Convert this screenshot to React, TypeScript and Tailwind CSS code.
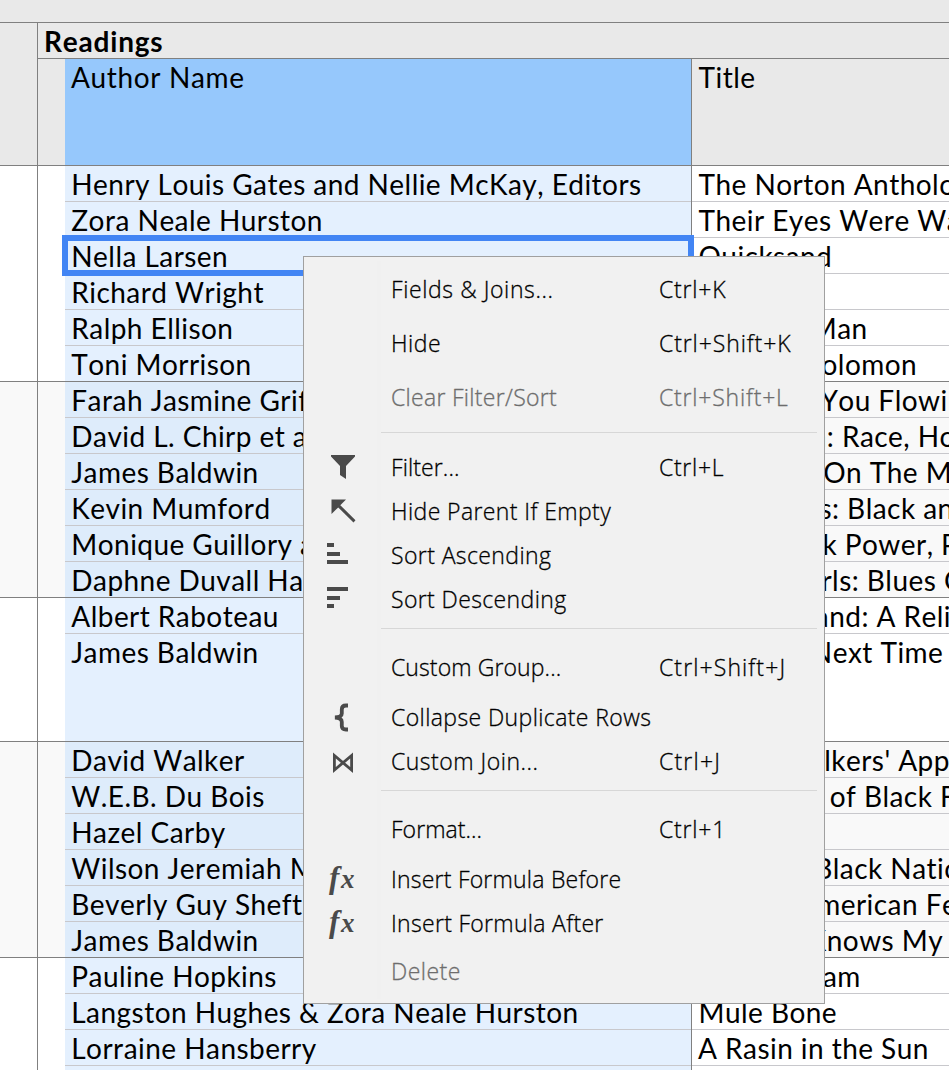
import React from "react";

type Row = { author: string; title: string; pad?: string; tall?: boolean; selected?: boolean };
type Group = { alt?: boolean; rows: Row[] };

const groups: Group[] = [
  {
    rows: [
      { author: "Henry Louis Gates and Nellie McKay, Editors", title: "The Norton Anthology" },
      { author: "Zora Neale Hurston", title: "Their Eyes Were Watching God" },
      { author: "Nella Larsen", title: "Quicksand", selected: true },
      { author: "Richard Wright", title: "" },
      { author: "Ralph Ellison", title: "Invisible Man" },
      { author: "Toni Morrison", title: "Song of Solomon", pad: "pl-[9px]" },
    ],
  },
  {
    alt: true,
    rows: [
      { author: "Farah Jasmine Griffin", title: "Who Set You Flowin'", pad: "pl-[10px]" },
      { author: "David L. Chirp et al.", title: "Transition: Race, Home", pad: "pl-[7px]" },
      { author: "James Baldwin", title: "Go Tell It On The Mountain", pad: "pl-[6px]" },
      { author: "Kevin Mumford", title: "Interzones: Black and White", pad: "pl-[6px]" },
      { author: "Monique Guillory and", title: "Soul: Black Power, Politics" },
      { author: "Daphne Duvall Harrison", title: "Black Pearls: Blues Queens" },
    ],
  },
  {
    rows: [
      { author: "Albert Raboteau", title: "Canaan Land: A Religious", pad: "pl-[6px]" },
      { author: "James Baldwin", title: "The Fire Next Time", tall: true, pad: "pl-[6px]" },
    ],
  },
  {
    alt: true,
    rows: [
      { author: "David Walker", title: "David Walkers' Appeal" },
      { author: "W.E.B. Du Bois", title: "The Souls of Black Folk" },
      { author: "Hazel Carby", title: "" },
      { author: "Wilson Jeremiah Moses", title: "Classical Black Nationalism" },
      { author: "Beverly Guy Sheftall", title: "African American Feminist" },
      { author: "James Baldwin", title: "Nobody Knows My Name" },
    ],
  },
  {
    rows: [
      { author: "Pauline Hopkins", title: "Primal Dram", pad: "pl-[11px]" },
      { author: "Langston Hughes & Zora Neale Hurston", title: "Mule Bone" },
      { author: "Lorraine Hansberry", title: "A Rasin in the Sun", pad: "pl-[6px]" },
      { author: "", title: "" },
    ],
  },
];

function FilterIcon() {
  return (
    <svg width="50" height="44" viewBox="0 0 50 44" fill="#4a4a4a">
      <path d="M13 9H37V10.500L28 20V33L22 29V20L13 10.500Z" />
    </svg>
  );
}

function ParentIcon() {
  return (
    <svg width="50" height="44" viewBox="0 0 50 44" fill="#4a4a4a">
      <path d="M13.500 9.500H28L22.300 15.200L37.500 30.200L35.500 32.400L20.200 17.400L13.500 24Z" />
    </svg>
  );
}

function AscIcon() {
  return (
    <svg width="50" height="44" viewBox="0 0 50 44" fill="#4a4a4a">
      <path d="M9 9H16V13H9ZM9 18H22V22H9ZM9 26H30V30H9Z" />
    </svg>
  );
}

function DescIcon() {
  return (
    <svg width="50" height="44" viewBox="0 0 50 44" fill="#4a4a4a">
      <path d="M9 9H30V13H9ZM9 18H22V22H9ZM9 26H16V30H9Z" />
    </svg>
  );
}

function BraceIcon() {
  return (
    <svg width="50" height="44" viewBox="0 0 50 44" fill="none" stroke="#4a4a4a" strokeWidth="3.800">
      <path d="M30 9.500H28Q23.800 9.500 23.800 13.500V17.500Q23.800 21 17 21.500Q23.800 22 23.800 26V30Q23.800 33.500 28 33.500H30" />
    </svg>
  );
}

function JoinIcon() {
  return (
    <svg width="50" height="44" viewBox="0 0 50 44" fill="none" stroke="#4a4a4a" strokeWidth="2.800">
      <path d="M16.400 15.500V30L33.600 15.500V30Z" />
    </svg>
  );
}

function FormulaIcon() {
  return (
    <span className="flex w-[50px] items-baseline pb-[4px] pl-[11px] font-['Liberation_Serif',serif] text-[31px] leading-[38px] font-bold text-[#4a4a4a] italic">
      <span className="w-[12px]">f</span>
      <span className="text-[27px]">x</span>
    </span>
  );
}

type Item = {
  label: string;
  fit: string;
  keys?: string;
  keysFit?: string;
  icon?: () => React.JSX.Element;
  disabled?: boolean;
  h: string;
};
const sections: { items: Item[]; sep?: string }[] = [
  {
    sep: "h-[21px] pt-[7px]",
    items: [
      { label: "Fields & Joins...", fit: "tracking-[0.6px]", keys: "Ctrl+K", keysFit: "tracking-[0.8px]", h: "h-[54px]" },
      { label: "Hide", fit: "tracking-[0.5px]", keys: "Ctrl+Shift+K", keysFit: "tracking-[0.9px]", h: "h-[54px]" },
      {
        label: "Clear Filter/Sort",
        fit: "tracking-[0.3px]",
        keys: "Ctrl+Shift+L",
        keysFit: "tracking-[0.8px]",
        disabled: true,
        h: "h-[54px]",
      },
    ],
  },
  {
    sep: "h-[19px] pt-[6px]",
    items: [
      { label: "Filter...", fit: "tracking-[0.1px]", keys: "Ctrl+L", keysFit: "tracking-[0.7px]", icon: FilterIcon, h: "h-[44px]" },
      { label: "Hide Parent If Empty", fit: "tracking-[0.4px]", icon: ParentIcon, h: "h-[44px]" },
      { label: "Sort Ascending", fit: "tracking-[0.4px]", icon: AscIcon, h: "h-[44px]" },
      { label: "Sort Descending", fit: "tracking-[0.38px]", icon: DescIcon, h: "h-[44px]" },
    ],
  },
  {
    sep: "h-[21px] pt-[8px]",
    items: [
      { label: "Custom Group...", fit: "tracking-[0.1px]", keys: "Ctrl+Shift+J", keysFit: "tracking-[1.1px]", h: "h-[53px]" },
      { label: "Collapse Duplicate Rows", fit: "tracking-[0.4px]", icon: BraceIcon, h: "h-[48px]" },
      { label: "Custom Join...", fit: "tracking-[0.5px]", keys: "Ctrl+J", keysFit: "tracking-[1.2px]", icon: JoinIcon, h: "h-[40px]" },
    ],
  },
  {
    items: [
      { label: "Format...", fit: "tracking-[0.05px]", keys: "Ctrl+1", keysFit: "tracking-[0.8px]", h: "h-[53px]" },
      { label: "Insert Formula Before", fit: "tracking-[0.22px]", icon: FormulaIcon, h: "h-[48px]" },
      { label: "Insert Formula After", fit: "tracking-[0.3px]", icon: FormulaIcon, h: "h-[40px]" },
      { label: "Delete", fit: "tracking-[0.45px]", disabled: true, h: "h-[56px]" },
    ],
  },
];

function Menu() {
  return (
    <div className="absolute top-[256px] left-[303px] h-[748px] w-[522px] border border-[#a0a0a0] bg-[#f1f1f1] pt-[6px] font-['Open_Sans',sans-serif] text-[23px] font-light text-black [-webkit-text-stroke-width:0.3px]">
      <div className="absolute top-[4px] left-[73px] h-[738px] w-[4px] bg-[#f0f0f0]" />
      {sections.map((s, i) => (
        <div key={i}>
          {s.items.map((it) => (
            <div key={it.label} className={`relative flex items-center ${it.h} ${it.disabled ? "text-[#6d6d6d]" : ""}`}>
              <div className="w-[87px] shrink-0 pl-[14px] [-webkit-text-stroke-width:0]">{it.icon && <it.icon />}</div>
              <span className={`w-[268px] shrink-0 pb-[2px] whitespace-nowrap ${it.fit}`}>{it.label}</span>
              <span className={`pb-[2px] whitespace-nowrap ${it.keysFit ?? ""}`}>{it.keys}</span>
            </div>
          ))}
          {s.sep && (
            <div className={`pr-[7px] pl-[77px] ${s.sep}`}>
              <div className="h-px bg-[#d7d7d7]" />
            </div>
          )}
        </div>
      ))}
    </div>
  );
}

export default function App() {
  return (
    <div className="relative h-[1070px] w-[949px] overflow-hidden bg-white font-['Lato',sans-serif] text-[28px] leading-[36px] tracking-[0.45px] whitespace-nowrap text-black [font-kerning:none] [font-variant-ligatures:none]">
      <div className="h-[23px] border-b border-[#808080] bg-[#e9e9e9]" />
      <div className="flex h-[143px] border-b border-[#808080] bg-[#e9e9e9]">
        <div className="w-[38px] shrink-0 border-r border-[#808080]" />
        <div className="flex grow flex-col">
          <div className="h-[36px] border-b border-[#808080] pl-[6px] font-bold tracking-[0.8px]">Readings</div>
          <div className="flex grow">
            <div className="w-[27px] shrink-0" />
            <div className="w-[627px] shrink-0 border-r border-[#808080] bg-[#96c8fc] pl-[6px] tracking-[0.65px]">Author Name</div>
            <div className="pl-[6.5px]">Title</div>
          </div>
        </div>
      </div>
      {groups.map((g, gi) => (
        <div key={gi} className={`flex border-b border-[#808080] ${g.alt ? "bg-[#f9f9f9]" : "bg-white"}`}>
          <div className="w-[38px] shrink-0 border-r border-[#808080]" />
          <div className="w-[27px] shrink-0" />
          <div className={`w-[627px] shrink-0 border-r border-[#808080] ${g.alt ? "bg-[#deecfb]" : "bg-[#e4f0fe]"}`}>
            {g.rows.map((r, i) => (
              <div
                key={i}
                className={`relative border-[#c8c8cc] pl-[6.3px] ${r.tall ? "h-[107px]" : i === g.rows.length - 1 ? "h-[35px]" : "h-[36px] border-b"}`}
              >
                {r.author}
                {r.selected && <div className="absolute top-[-3px] left-[-3px] z-10 h-[41px] w-[632px] border-[6px] border-[#4285f4]" />}
              </div>
            ))}
          </div>
          <div className="grow">
            {g.rows.map((r, i) => (
              <div
                key={i}
                className={`border-[#c8c8cc] ${r.pad ?? "pl-[6.5px]"} ${r.tall ? "h-[107px]" : i === g.rows.length - 1 ? "h-[35px]" : "h-[36px] border-b"}`}
              >
                {r.title}
              </div>
            ))}
          </div>
        </div>
      ))}
      <div className="absolute inset-0 z-20">
        <Menu />
      </div>
    </div>
  );
}
